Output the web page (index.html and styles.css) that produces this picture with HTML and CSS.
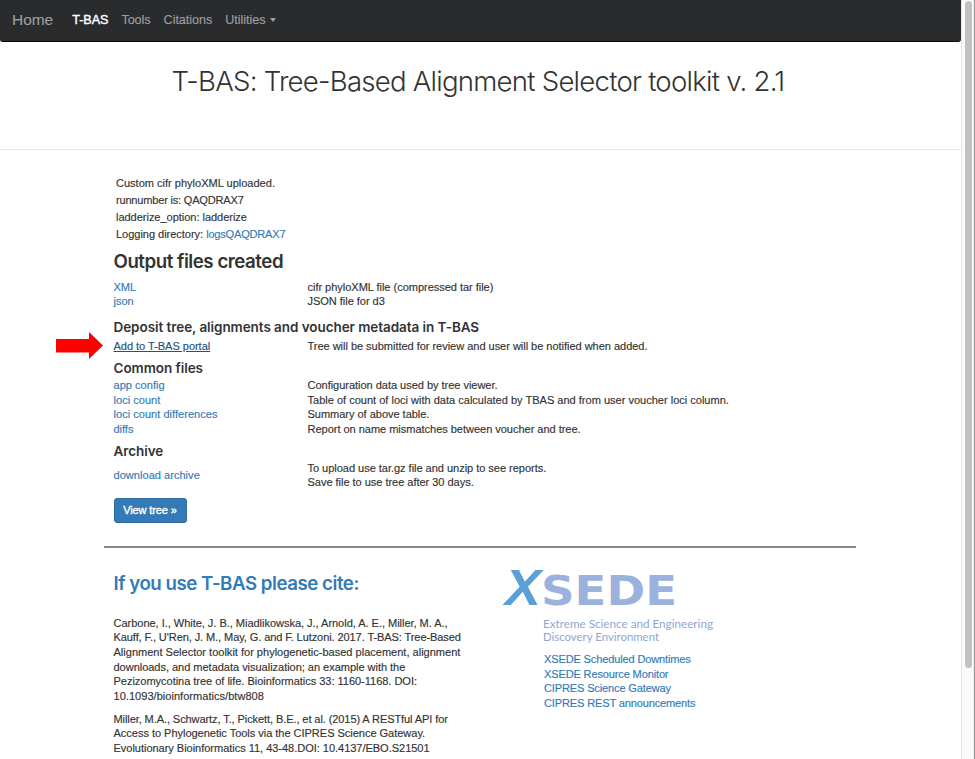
FILE: index.html
```
<!DOCTYPE html>
<html lang="en">
<head>
<meta charset="utf-8">
<title>T-BAS</title>
<link rel="stylesheet" href="styles.css">
</head>
<body>
<div class="window">
<div class="page">
  <nav class="navbar">
    <a class="brand">Home</a>
    <a class="active">T-BAS</a>
    <a>Tools</a>
    <a>Citations</a>
    <a>Utilities<i class="caret"></i></a>
  </nav>
  <header class="masthead"><h1>T-BAS: Tree-Based Alignment Selector toolkit v. 2.1</h1></header>
  <main class="content">
    <div class="log">
      <div class="wide">Custom cifr phyloXML uploaded.</div>
      <div class="run">runnumber is: QAQDRAX7</div>
      <div>ladderize_option: ladderize</div>
      <div>Logging directory: <a class="run">logsQAQDRAX7</a></div>
    </div>
    <h2>Output files created</h2>
    <div class="files">
      <a>XML</a><span>cifr phyloXML file (compressed tar file)</span>
      <a>json</a><span>JSON file for d3</span>
    </div>
    <h4 class="deposit">Deposit tree, alignments and voucher metadata in T-BAS</h4>
    <div class="files pointed">
      <svg class="arrow" width="47" height="28" viewBox="0 0 47 28"><path d="M0 7H33V0L47 13.500L33 27V20.500H0Z" fill="#f00"/></svg>
      <a class="hover">Add to T-BAS portal</a><span>Tree will be submitted for review and user will be notified when added.</span>
    </div>
    <h4 class="common">Common files</h4>
    <div class="files">
      <a class="loose">app config</a><span>Configuration data used by tree viewer.</span>
      <a class="loose">loci count</a><span class="wide">Table of count of loci with data calculated by TBAS and from user voucher loci column.</span>
      <a class="loose">loci count differences</a><span>Summary of above table.</span>
      <a>diffs</a><span>Report on name mismatches between voucher and tree.</span>
    </div>
    <h4 class="archive">Archive</h4>
    <div class="files">
      <a class="loose">download archive</a><span>To upload use tar.gz file and unzip to see reports.<br>Save file to use tree after 30 days.</span>
    </div>
    <a class="btn">View tree »</a>
    <hr>
    <div class="footer">
      <section class="cite">
        <h3>If you use T-BAS please cite:</h3>
        <p>Carbone, I., White, J. B., Miadlikowska, J., Arnold, A. E., Miller, M. A.,<br><span class="tight">Kauff, F., U'Ren, J. M., May, G. and F. Lutzoni. 2017. T-BAS: Tree-Based</span><br><span class="wide">Alignment Selector toolkit for phylogenetic-based placement, alignment</span><br>downloads, and metadata visualization; an example with the<br>Pezizomycotina tree of life. Bioinformatics 33: 1160-1168. DOI:<br><span class="loose">10.1093/bioinformatics/btw808</span></p>
        <p><span class="tight">Miller, M.A., Schwartz, T., Pickett, B.E., et al. (2015) A RESTful API for</span><br>Access to Phylogenetic Tools via the CIPRES Science Gateway.<br>Evolutionary Bioinformatics 11, 43-48.DOI: 10.4137/EBO.S21501</p>
      </section>
      <section class="xsede">
        <svg class="logo" width="220" height="76" viewBox="0 0 220 76">
          <text class="logo-x" x="3" y="36.500" textLength="36" lengthAdjust="spacingAndGlyphs">X</text>
          <text class="logo-name" x="39" y="37" textLength="136" lengthAdjust="spacingAndGlyphs">SEDE</text>
          <text class="logo-tag" x="41" y="59.500" textLength="170" lengthAdjust="spacingAndGlyphs">Extreme Science and Engineering</text>
          <text class="logo-tag" x="41" y="73" textLength="116" lengthAdjust="spacingAndGlyphs">Discovery Environment</text>
        </svg>
        <div class="links">
          <a>XSEDE Scheduled Downtimes</a>
          <a>XSEDE Resource Monitor</a>
          <a>CIPRES Science Gateway</a>
          <a>CIPRES REST announcements</a>
        </div>
      </section>
    </div>
  </main>
</div>
<div class="scrollbar"><div class="thumb"></div></div>
<div class="edge"></div>
</div>
</body>
</html>
```
FILE: styles.css
```
* { box-sizing: border-box; }
body {
  margin: 0;
  background: #fff;
  color: #333;
  font: 11.05px/14.65px "Liberation Sans", Arial, sans-serif;
  letter-spacing: -0.04px;
  -webkit-text-stroke: 0.15px currentColor;
  overflow: hidden;
}
a { color: #337ab7; text-decoration: none; }
h1, h2, h3, h4, p { margin: 0; }
h2, h3, h4 { font-family: Inter, "Liberation Sans", sans-serif; font-weight: 600; -webkit-text-stroke: 0; }
.window { display: flex; height: 759px; overflow: hidden; }
.page { width: 961px; height: 759px; overflow: hidden; }
.wide { letter-spacing: -0.01px; }
.loose { letter-spacing: 0.02px; }
.tight { letter-spacing: -0.1px; }
.run { letter-spacing: -0.2px; }

.navbar {
  display: flex;
  align-items: center;
  height: 42px;
  padding: 0 0 1px 12px;
  background: #2a2b2d;
  border-bottom: 1px solid #080808;
  border-radius: 0 0 3px 3px;
  font-size: 12.6px;
}
.navbar a { color: #9d9d9d; margin-right: 13px; }
.navbar .brand { font-size: 15.500px; margin-right: 19px; }
.navbar .active { color: #fff; -webkit-text-stroke: 0.4px #fff; }
.caret {
  display: inline-block;
  margin-left: 5px;
  vertical-align: middle;
  border: 3.5px solid transparent;
  border-top: 4px solid #9d9d9d;
  border-bottom: 0;
}
.masthead {
  height: 108px;
  padding: 21px 5px 0 0;
  border-bottom: 1px solid #e5e5e5;
  text-align: center;
}
.masthead h1 { font: 300 27.600px/36px Inter, sans-serif; letter-spacing: -0.77px; -webkit-text-stroke: 0; }

.content { width: 752px; margin-left: 104px; padding-top: 25px; }
.log { padding-left: 12px; line-height: 17px; }
h2 { height: 36.500px; padding: 6px 0 0 9.500px; font-size: 18.700px; line-height: 26px; letter-spacing: -0.47px; }
h4 { padding-left: 9.500px; font-size: 13.500px; line-height: 18px; letter-spacing: -0.06px; }
.files {
  display: grid;
  grid-template-columns: 194px 1fr;
  align-items: center;
  padding-left: 9.500px;
  position: relative;
}
.hover { color: #23527c; text-decoration: underline; }
.arrow { position: absolute; left: -48px; top: -7px; }
.deposit { margin: 9px 0 3px; }
.common { margin: 5.700px 0 0.8px; }
.archive { margin: 5.500px 0 0.700px; }
.btn {
  display: block;
  width: 73px;
  height: 25px;
  margin: 7.700px 0 0 9.500px;
  border: 1px solid #2e6da4;
  border-radius: 3px;
  background: #337ab7;
  color: #fff;
  line-height: 23px;
  text-align: center;
  letter-spacing: -0.12px;
  -webkit-text-stroke: 0.35px #fff;
}
hr { margin: 23.300px 0 0; border: 0; border-top: 2px solid #8a8a8a; }
.footer { display: flex; }
.cite { width: 398px; padding: 22px 0 0 9.500px; }
.cite h3 { height: 45.700px; color: #337ab7; font-size: 18.700px; line-height: 28px; letter-spacing: -0.47px; }
.cite p { margin-bottom: 8px; white-space: nowrap; }
.xsede { padding-top: 20px; }
.logo { display: block; overflow: visible; letter-spacing: 0; -webkit-text-stroke: 0; }
.logo text { font-weight: 700; }
.logo .logo-x { font: italic 700 50px "Liberation Sans", sans-serif; fill: #5a9fd8; }
.logo .logo-name { font-family: "DejaVu Sans", sans-serif; font-size: 41px; fill: #9cb2de; }
.logo .logo-tag { font: 12px Lato, sans-serif; fill: #8fa6d4; }
.links { display: flex; flex-direction: column; padding: 8px 0 0 42px; letter-spacing: -0.15px; }

.scrollbar {
  width: 12px;
  height: 759px;
  padding: 1px 0 0 3px;
  border-left: 1px solid #e6e6e6;
  background: #fafafa;
}
.thumb { width: 7px; height: 667px; border-radius: 4px; background: #c1c1c1; }
.edge { width: 2px; background: #999; border-left: 1px solid #eee; }
```
